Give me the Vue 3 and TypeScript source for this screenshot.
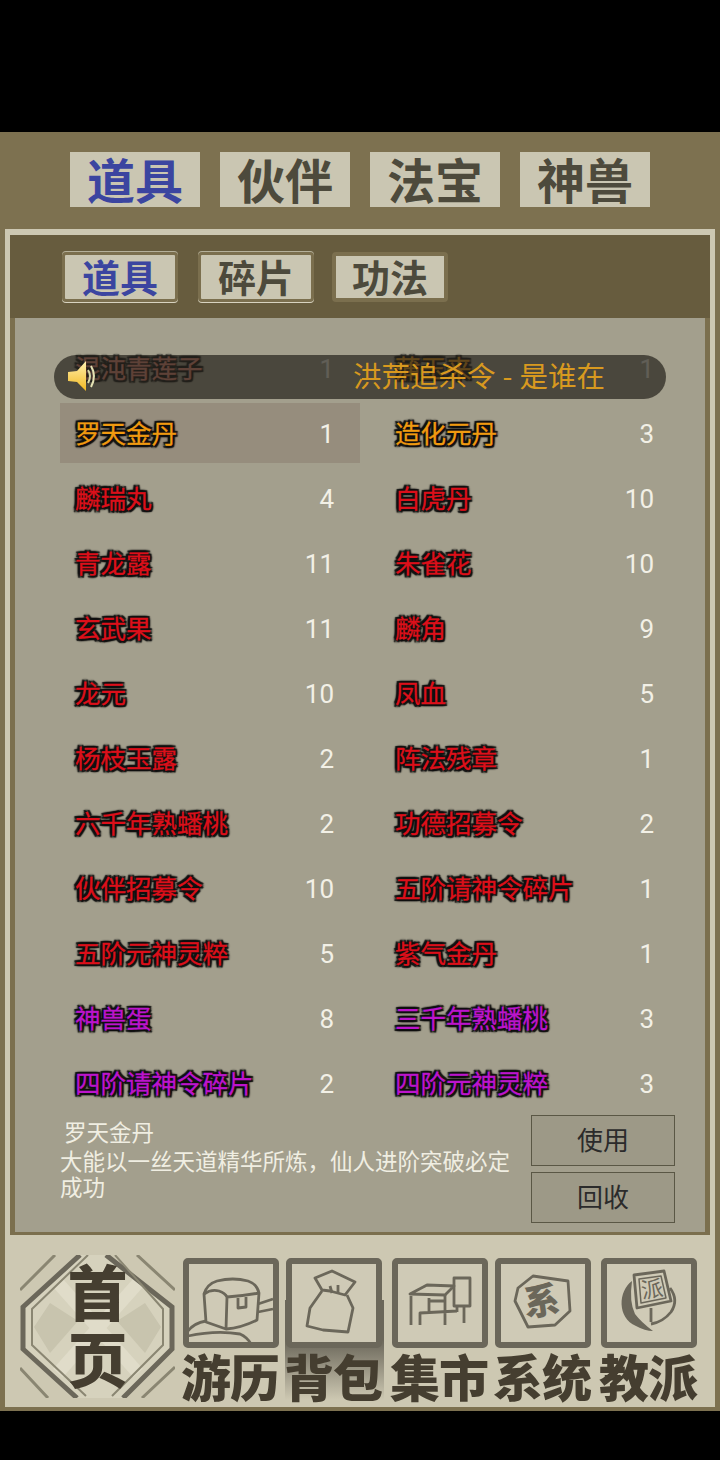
<template>
  <div class="page">
    <div class="shell">
      <div class="tabs">
        <div v-for="(t, i) in topTabs" :key="t" class="tab" :class="{ on: i === 0 }">{{ t }}</div>
      </div>
      <div class="frame">
        <div class="panel">
          <div class="subtabs">
            <div v-for="(t, i) in subTabs" :key="t" class="subtab" :class="{ on: i === 0, plain: i === 2 }">{{ t }}</div>
          </div>
          <div class="content">
            <div class="list">
              <div v-for="it in items" :key="it.name" class="row" :class="{ picked: it.name === picked }">
                <span class="name" :class="it.tone">{{ it.name }}</span>
                <span class="num">{{ it.count }}</span>
              </div>
            </div>
            <div class="info">
              <div class="desc">
                <div class="desc-title">{{ picked }}</div>
                <div class="desc-text">大能以一丝天道精华所炼，仙人进阶突破必定成功</div>
              </div>
              <div class="actions">
                <div class="btn">使用</div>
                <div class="btn">回收</div>
              </div>
            </div>
            <div class="notice">
              <svg class="speaker" width="32" height="34" viewBox="0 0 32 34">
                <defs>
                  <linearGradient id="spk" x1="0" y1="0" x2="0" y2="1">
                    <stop offset="0" stop-color="#fff0b0" />
                    <stop offset="1" stop-color="#f0b820" />
                  </linearGradient>
                </defs>
                <path d="M1 13 L10 12 L19 2 L19 32 L10 23 L1 22 Z" fill="url(#spk)" />
                <path d="M21 11 Q25 17 21 24" fill="none" stroke="#d8d8a8" stroke-width="2" />
                <path d="M24 7 Q30 17 24 28" fill="none" stroke="#e4e2b4" stroke-width="2" />
              </svg>
              <span class="notice-text">洪荒追杀令<span class="dash">-</span>是谁在</span>
            </div>
          </div>
        </div>
        <div class="nav">
          <div class="home">
            <svg width="155" height="143" viewBox="0 0 155 143">
              <path d="M60 0 L4 50 L4 95 L57 143 L103 143 L151 95 L151 50 L88 0 Z" fill="#d6d2bd" />
              <path d="M30 48 L58 66 L30 98 L14 72 Z M125 48 L97 66 L125 98 L141 72 Z" fill="#c8c4ae" />
              <path d="M38 28 L118 118 M118 28 L38 118" fill="none" stroke="#e0dcc9" stroke-width="13" />
              <path d="M60 0 L3 52 L3 94 L57 143" fill="none" stroke="#6b675a" stroke-width="5" />
              <path d="M86 0 L152 52 L152 94 L103 143" fill="none" stroke="#6b675a" stroke-width="5" />
              <path d="M68 0 L12 54 L12 90 L66 141 M95 0 L143 54 L143 90 L92 141" fill="none" stroke="#8a8672" stroke-width="2" />
              <path d="M0 35 L35 0 M117 0 L155 35 M0 113 L28 143 M155 112 L122 143" fill="none" stroke="#8a8672" stroke-width="3" />
            </svg>
            <div class="home-text"><span>首</span><span>页</span></div>
          </div>
          <div class="nav-items">
            <div v-for="n in navItems" :key="n.key" class="nav-item" :class="{ active: n.key === 'bag' }">
              <svg class="icon" width="96" height="90" viewBox="0 0 96 90">
                <rect x="3" y="3" width="90" height="84" rx="2" class="card" />
                <g v-if="n.key === 'chest'" class="ink">
                  <path d="M21 36 Q24 26 34 23 Q50 19 65 23 Q74 26 76 35 L74 62 Q58 70 43 71 L23 64 Z" />
                  <path d="M21 36 Q28 31 36 33 Q42 35 44 39 Q60 38 76 35 M44 39 L43 71 M55 40 L55 50 L63 49 L63 39" />
                  <path d="M5 73 Q11 65 23 63 M5 78 Q33 72 57 76 Q64 79 68 86 M75 46 L90 41 M75 54 L90 51" />
                </g>
                <g v-else-if="n.key === 'bag'" class="ink">
                  <path d="M29 20 L46 13 L69 24 L59 37 L44 33 L36 32 Z" />
                  <path d="M36 33 L24 50 L21 68 L37 72 L62 74 L67 50 L61 37" />
                  <path d="M44 28 L46 35 M52 27 L52 35" />
                </g>
                <g v-else-if="n.key === 'market'" class="ink">
                  <path d="M18 36 L35 27 L62 28 L53 37 Z" />
                  <path d="M19 38 L19 67 M53 37 L53 67 M37 40 L37 55 M37 43 L53 43 M28 67 L28 55 L65 53 M72 48 L72 65 M65 48 L65 54" />
                  <rect x="62" y="20" width="16" height="28" />
                </g>
                <g v-else-if="n.key === 'system'">
                  <path class="ink" d="M38 18 L73 23 L75 53 L60 67 L33 69 L20 43 L23 30 Z" />
                  <text x="47" y="56" class="glyph big" transform="rotate(-8 47 44)">系</text>
                </g>
                <g v-else>
                  <path d="M31 23 C17 33 16 60 35 68 Q44 73 52 73 Q40 64 34 56 Q28 44 31 23 Z" fill="#6b675a" />
                  <path class="ink" d="M69 30 Q78 42 70 54 Q62 64 50 66 M50 50 L50 64" />
                  <path class="ink" d="M33 17 L63 13 L70 43 L36 50 Z" />
                  <path class="ink thin" d="M38 21 L60 18 L65 40 L40 45 Z" />
                  <text x="51" y="39" class="glyph" transform="rotate(-8 51 30)">派</text>
                </g>
              </svg>
              <div class="nav-label">{{ n.label }}</div>
            </div>
          </div>
        </div>
      </div>
    </div>
  </div>
</template>

<script setup lang="ts">
interface Item {
  name: string;
  count: number;
  tone: string;
}

const topTabs = ['道具', '伙伴', '法宝', '神兽'];
const subTabs = ['道具', '碎片', '功法'];
const picked = '罗天金丹';

const items: Item[] = [
  { name: '混沌青莲子', count: 1, tone: 'rust' },
  { name: '蒲玉来', count: 1, tone: 'gold' },
  { name: '罗天金丹', count: 1, tone: 'gold' },
  { name: '造化元丹', count: 3, tone: 'gold' },
  { name: '麟瑞丸', count: 4, tone: 'red' },
  { name: '白虎丹', count: 10, tone: 'red' },
  { name: '青龙露', count: 11, tone: 'red' },
  { name: '朱雀花', count: 10, tone: 'red' },
  { name: '玄武果', count: 11, tone: 'red' },
  { name: '麟角', count: 9, tone: 'red' },
  { name: '龙元', count: 10, tone: 'red' },
  { name: '凤血', count: 5, tone: 'red' },
  { name: '杨枝玉露', count: 2, tone: 'red' },
  { name: '阵法残章', count: 1, tone: 'red' },
  { name: '六千年熟蟠桃', count: 2, tone: 'red' },
  { name: '功德招募令', count: 2, tone: 'red' },
  { name: '伙伴招募令', count: 10, tone: 'red' },
  { name: '五阶请神令碎片', count: 1, tone: 'red' },
  { name: '五阶元神灵粹', count: 5, tone: 'red' },
  { name: '紫气金丹', count: 1, tone: 'red' },
  { name: '神兽蛋', count: 8, tone: 'purple' },
  { name: '三千年熟蟠桃', count: 3, tone: 'purple' },
  { name: '四阶请神令碎片', count: 2, tone: 'purple' },
  { name: '四阶元神灵粹', count: 3, tone: 'purple' },
];

const navItems = [
  { key: 'chest', label: '游历' },
  { key: 'bag', label: '背包' },
  { key: 'market', label: '集市' },
  { key: 'system', label: '系统' },
  { key: 'sect', label: '教派' },
];
</script>

<style>
html,
body {
  margin: 0;
  background: #000;
}
</style>

<style scoped>
.page {
  width: 720px;
  height: 1460px;
  background: #000;
  padding-top: 132px;
  box-sizing: border-box;
  font-family: "Noto Sans CJK SC", "Liberation Sans", sans-serif;
}

.shell {
  height: 1279px;
  box-sizing: border-box;
  background: #7d7150;
  padding: 20px 5px 4px;
  display: flex;
  flex-direction: column;
}

.tabs {
  display: flex;
  gap: 20px;
  padding-left: 65px;
  margin-bottom: 22px;
}

.tab {
  width: 130px;
  height: 55px;
  background: #cac6b2;
  color: #4d4a3c;
  font-size: 48px;
  font-weight: 700;
  line-height: 53px;
  text-align: center;
}

.tab.on,
.subtab.on {
  color: #3b45a0;
}

.frame {
  flex: 1;
  background: #cdc8b2;
  padding: 6px 5px 0;
  display: flex;
  flex-direction: column;
}

.panel {
  height: 1000px;
  box-sizing: border-box;
  background: #675c3e;
  padding: 17px 5px 3px;
  display: flex;
  flex-direction: column;
}

.subtabs {
  display: flex;
  gap: 20px;
  padding-left: 47px;
  margin-bottom: 16px;
}

.subtab {
  width: 116px;
  height: 50px;
  box-sizing: border-box;
  background: #cac6b2;
  border: 3px solid #7b6f4e;
  border-radius: 4px;
  box-shadow: 0 1px 0 #d8d3c0, 0 -1px 0 #b5b09a;
  color: #4d4a3c;
  font-size: 38px;
  font-weight: 700;
  line-height: 42px;
  text-align: center;
}

.subtab.plain {
  margin-left: -2px;
  box-shadow: none;
  border-width: 4px;
  line-height: 40px;
}

.content {
  flex: 1;
  position: relative;
  background: #a39f8d;
  box-shadow: 5px 0 0 #7b6f4e, -5px 0 0 #7b6f4e, 0 3px 0 #7b6f4e, 5px 3px 0 #7b6f4e, -5px 3px 0 #7b6f4e;
  padding: 20px 0 0 45px;
}

.list {
  display: grid;
  grid-template-columns: 300px 300px;
  grid-auto-rows: 60px;
  gap: 5px 20px;
}

.row {
  display: flex;
  align-items: center;
  justify-content: space-between;
  padding: 0 26px 0 15px;
}

.row.picked {
  background: #968d7d;
}

.name {
  font-size: 25.5px;
  line-height: 30px;
  padding-bottom: 2px;
  -webkit-text-stroke: 0.3px currentColor;
  text-shadow: 2px 0 2px #111, -2px 0 2px #111, 0 2px 2px #111, 0 -2px 2px #111, 2px 2px 1px #111, -2px 2px 1px #111, 2px -2px 1px #111, -2px -2px 1px #111, 1px 1px 1px #111, -1px -1px 1px #111;
}

.gold {
  color: #f09a10;
}

.rust {
  color: #e88a78;
}

.red {
  color: #dc0f1a;
}

.purple {
  color: #bc14cc;
}

.num {
  font-family: Roboto, "Liberation Sans", sans-serif;
  font-size: 26px;
  padding-top: 2px;
  color: #f2f0e6;
}

.info {
  display: flex;
  margin-top: 2px;
}

.desc {
  width: 471px;
  color: #f0eee2;
  font-size: 22.5px;
  line-height: 26px;
}

.desc-text {
  width: 455px;
}

.desc-title {
  margin: 1px 0 1px 4px;
  line-height: 30px;
}

.actions {
  display: flex;
  flex-direction: column;
  gap: 6px;
}

.btn {
  width: 144px;
  height: 51px;
  box-sizing: border-box;
  border: 1px solid #5a5745;
  background: #9d9987;
  color: #2b2b2b;
  font-size: 26px;
  line-height: 46px;
  text-align: center;
}

.notice {
  position: absolute;
  left: 39px;
  top: 37px;
  width: 612px;
  height: 44px;
  border-radius: 22px;
  background: rgba(40, 38, 30, 0.72);
  overflow: hidden;
}

.speaker {
  position: absolute;
  left: 13px;
  top: 4px;
}

.notice-text {
  position: absolute;
  left: 299px;
  top: 0;
  color: #d8991f;
  font-size: 28.5px;
  line-height: 40px;
  white-space: nowrap;
}

.dash {
  padding: 0 7px;
}

.nav {
  flex: 1;
  display: flex;
  padding: 20px 12px 0 10px;
}

.home {
  position: relative;
  width: 155px;
  height: 143px;
  flex: none;
}

.home svg {
  display: block;
}

.home-text {
  position: absolute;
  left: 0;
  right: 0;
  top: 4px;
  display: flex;
  flex-direction: column;
  align-items: center;
  gap: 5px;
  color: #453e30;
  font-size: 60px;
  font-weight: 900;
  line-height: 62px;
}

.nav-items {
  flex: 1;
  display: flex;
  gap: 7px;
  margin-left: 8px;
  padding-top: 3px;
}

.nav-item {
  position: relative;
  width: 96px;
}

.nav-item:nth-child(2n + 3) {
  margin-left: 3px;
}

.nav-item.active::before {
  content: "";
  position: absolute;
  left: -1px;
  right: -2px;
  top: 42px;
  height: 100px;
  background: linear-gradient(180deg, #6b675a 40%, #cdc8b2 100%);
}

.icon {
  position: relative;
  display: block;
}

.card {
  fill: #cfcab6;
  stroke: #6b675a;
  stroke-width: 6;
}

.ink path,
.ink rect,
path.ink {
  fill: none;
  stroke: #6b675a;
  stroke-width: 2.8;
  stroke-linejoin: round;
}

path.thin {
  stroke-width: 1.5;
}

.glyph {
  fill: #6b675a;
  font-size: 22px;
  text-anchor: middle;
}

.glyph.big {
  font-size: 36px;
  font-weight: 900;
}

.nav-label {
  position: relative;
  margin: 2px -4px 0 -6px;
  color: #453e30;
  font-size: 50px;
  font-weight: 900;
  line-height: 50px;
  letter-spacing: -1px;
  text-align: center;
  white-space: nowrap;
}
</style>
